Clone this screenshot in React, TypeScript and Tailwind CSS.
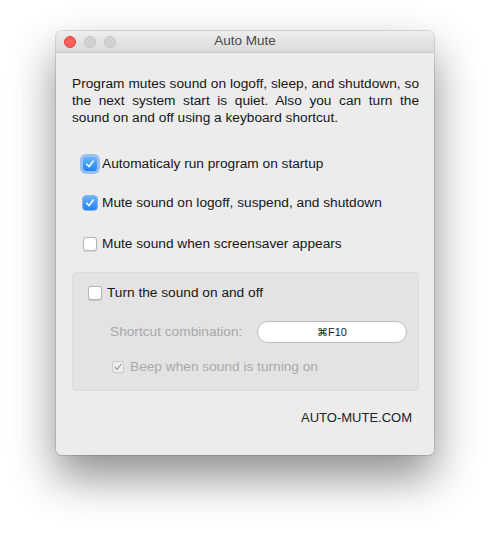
import type { ReactNode } from "react";

type BoxProps = { checked?: boolean; focused?: boolean; disabled?: boolean };

function CheckBox({ checked, focused, disabled }: BoxProps) {
  if (disabled) {
    return (
      <span className="flex h-[12px] w-[12px] shrink-0 items-center justify-center rounded-[2px] border border-[#c9c9c9] bg-[#efefef]">
        {checked && (
          <svg viewBox="0 0 12 12" className="h-[10px] w-[10px]">
            <path d="M2.5 6.3 L5 8.8 L9.6 2.8" fill="none" stroke="#9a9a9a" strokeWidth="1.3" strokeLinecap="round" strokeLinejoin="round" />
          </svg>
        )}
      </span>
    );
  }
  if (checked) {
    return (
      <span
        className={
          focused
            ? "flex h-[14px] w-[14px] shrink-0 items-center justify-center rounded-[3px] bg-gradient-to-b from-[#68b3fd] to-[#1a82fb] shadow-[0_0_0_3px_rgba(90,155,235,0.55)]"
            : "flex h-[14px] w-[14px] shrink-0 items-center justify-center rounded-[3px] bg-gradient-to-b from-[#68b3fd] to-[#1a82fb] shadow-[0_0_0_0.5px_#2a7de0]"
        }
      >
        <svg viewBox="0 0 14 14" className="h-[12px] w-[12px]">
          <path d="M3.2 7.3 L6 10 L10.8 3.6" fill="none" stroke="#ffffff" strokeWidth="1.8" strokeLinecap="round" strokeLinejoin="round" />
        </svg>
      </span>
    );
  }
  return <span className="h-[14px] w-[14px] shrink-0 rounded-[3px] border border-[#b4b4b4] bg-white shadow-[0_0.5px_1px_rgba(0,0,0,0.12)]" />;
}

function Row({ box, children, className }: { box: ReactNode; children: ReactNode; className?: string }) {
  return (
    <div className={"flex h-[18px] items-center " + (className ?? "")}>
      {box}
      {children}
    </div>
  );
}

export default function App() {
  return (
    <div
      className="h-[535px] w-[490px] overflow-hidden bg-white pt-[31px] pl-[56px] text-[13.7px] text-[#161616]"
      style={{ fontFamily: '"Liberation Sans", Arial, sans-serif' }}
    >
      <div className="flex h-[424px] w-[378px] flex-col rounded-[5px] bg-[#ececec] shadow-[0_0_0_0.5px_rgba(0,0,0,0.25),0_22px_45px_rgba(0,0,0,0.45)]">
        {/* title bar */}
        <div className="relative flex h-[22px] shrink-0 items-center justify-center rounded-t-[5px] border-b border-[#c8c8c8] bg-gradient-to-b from-[#eeeeee] to-[#dadada]">
          <div className="absolute left-[8px] top-[5px] flex gap-[8px]">
            <span className="h-[12px] w-[12px] rounded-full border border-[#e0443e] bg-[#fc605c]" />
            <span className="h-[12px] w-[12px] rounded-full border border-[#c6c6c6] bg-[#d1d1d1]" />
            <span className="h-[12px] w-[12px] rounded-full border border-[#c6c6c6] bg-[#d1d1d1]" />
          </div>
          <span className="text-[13.5px] text-[#4a4a4a]">Auto Mute</span>
        </div>

        <div className="flex flex-col pl-[16px] pr-[15px] pt-[22px]">
          <p className="text-justify leading-[17px]">
            Program mutes sound on logoff, sleep, and shutdown, so the next system start is quiet. Also you can turn the sound on and off using a keyboard shortcut.
          </p>

          <div className="pl-[11px]">
            <Row className="mt-[29px]" box={<CheckBox checked focused />}>
              <span className="ml-[5px]">Automaticaly run program on startup</span>
            </Row>
            <Row className="mt-[21px]" box={<CheckBox checked />}>
              <span className="ml-[5px]">Mute sound on logoff, suspend, and shutdown</span>
            </Row>
            <Row className="mt-[23px]" box={<CheckBox />}>
              <span className="ml-[5px]">Mute sound when screensaver appears</span>
            </Row>
          </div>

          <div className="mt-[19px] h-[119px] rounded-[4px] border border-[#dcdcdc] bg-[#e3e3e3] pl-[15px] pr-[11px] pt-[11px]">
            <Row box={<CheckBox />}>
              <span className="ml-[5px]">Turn the sound on and off</span>
            </Row>
            <div className="mt-[19px] flex h-[22px] items-center pl-[22px]">
              <span className="w-[147px] text-[#a9a9a9]">Shortcut combination:</span>
              <div className="flex h-[22px] w-[150px] items-center justify-center rounded-full border border-[#bdbdbd] bg-white text-[11px] text-[#222]">
                ⌘F10
              </div>
            </div>
            <Row className="mt-[15px] pl-[24px]" box={<CheckBox checked disabled />}>
              <span className="ml-[6px] text-[#a9a9a9]">Beep when sound is turning on</span>
            </Row>
          </div>

          <div className="mt-[18px] flex h-[18px] items-center justify-end pr-[7px] text-[13px] text-[#222]">AUTO-MUTE.COM</div>
        </div>
      </div>
    </div>
  );
}
